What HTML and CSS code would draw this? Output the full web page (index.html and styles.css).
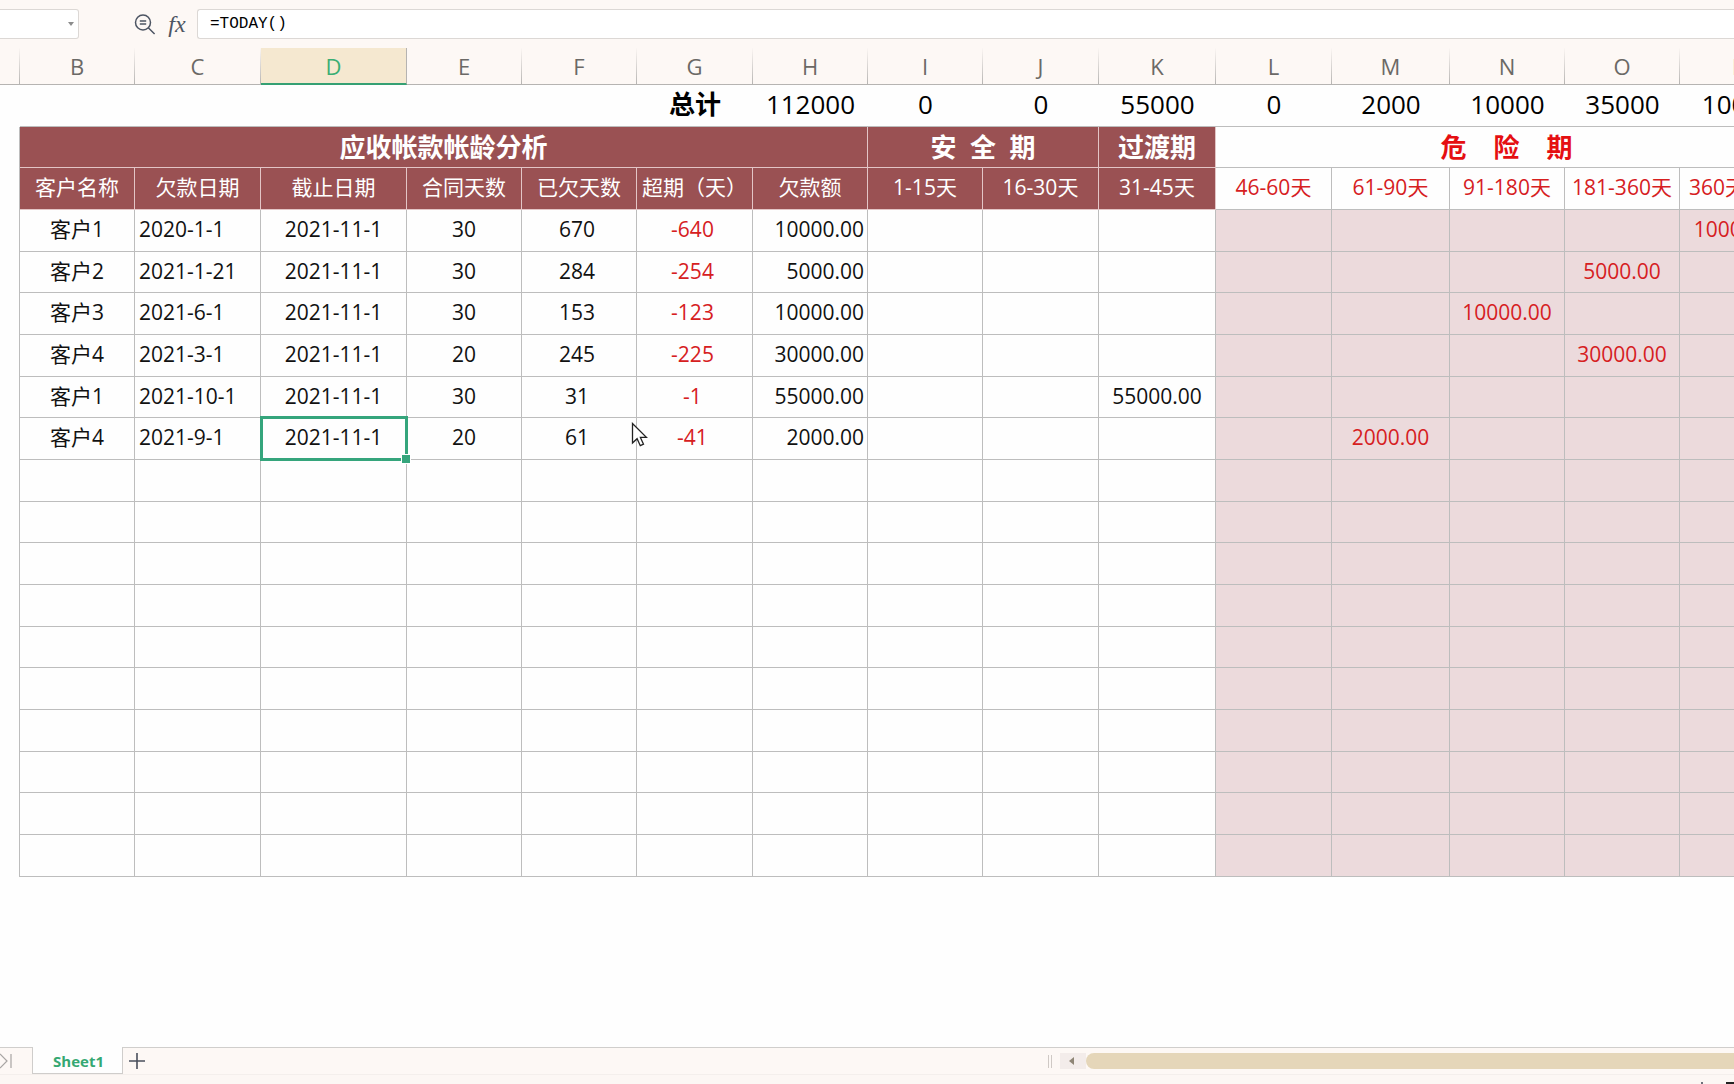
FILE: index.html
```html
<!DOCTYPE html>
<html lang="zh-CN">
<head>
<meta charset="utf-8">
<title>应收帐款帐龄分析</title>
<link rel="stylesheet" href="styles.css">
</head>
<body>
<div class="app">
  <header class="formula-bar">
    <button class="name-box" aria-label="名称框"><svg width="6" height="4" viewBox="0 0 6 4"><path d="M0 0h6L3 4z" fill="#8c8c8c"/></svg></button>
    <button class="tool tool-search" aria-label="查找函数"><svg width="22" height="22" viewBox="0 0 22 22" fill="none" stroke="#4d5563" stroke-width="1.5"><circle cx="9" cy="9.500" r="7.5"/><path d="M14.3 14.8L20.6 21M5.8 7.9h6.4M5.8 10.9h6.4"/></svg></button>
    <button class="tool tool-fx" aria-label="插入函数"><i>fx</i></button>
    <input class="formula" type="text" aria-label="编辑栏" value="=TODAY()">
  </header>
  <main class="sheet">
    <table class="grid">
      <colgroup>
        <col class="w-a"><col class="w-s"><col class="w-c"><col class="w-d"><col class="w-s"><col class="w-s"><col class="w-m"><col class="w-s"><col class="w-s"><col class="w-m"><col class="w-k"><col class="w-m"><col class="w-l"><col class="w-s"><col class="w-s"><col class="w-l">
      </colgroup>
      <thead>
        <tr class="letters"><th></th><th>B</th><th>C</th><th class="active">D</th><th>E</th><th>F</th><th>G</th><th>H</th><th>I</th><th>J</th><th>K</th><th>L</th><th>M</th><th>N</th><th>O</th><th>P</th></tr>
      </thead>
      <tbody>
        <tr class="totals"><td></td><td></td><td></td><td></td><td></td><td></td><th>总计</th><td>112000</td><td>0</td><td>0</td><td>55000</td><td>0</td><td>2000</td><td>10000</td><td>35000</td><td>10000</td></tr>
        <tr class="groups"><td class="edge"></td><th class="dark" colspan="7">应收帐款帐龄分析</th><th class="dark" colspan="2">安  全  期</th><th class="dark">过渡期</th><th class="danger" colspan="5">危    险    期</th></tr>
        <tr class="heads"><td class="edge"></td><th class="dark">客户名称</th><th class="dark">欠款日期</th><th class="dark">截止日期</th><th class="dark">合同天数</th><th class="dark">已欠天数</th><th class="dark">超期（天）</th><th class="dark">欠款额</th><th class="dark">1-15天</th><th class="dark">16-30天</th><th class="dark">31-45天</th><th class="danger">46-60天</th><th class="danger">61-90天</th><th class="danger">91-180天</th><th class="danger">181-360天</th><th class="danger">360天以上</th></tr>
      </tbody>
      <tbody class="data">
        <tr><td></td><td>客户1</td><td>2020-1-1</td><td>2021-11-1</td><td>30</td><td>670</td><td>-640</td><td>10000.00</td><td></td><td></td><td></td><td></td><td></td><td></td><td></td><td>10000.00</td></tr>
        <tr><td></td><td>客户2</td><td>2021-1-21</td><td>2021-11-1</td><td>30</td><td>284</td><td>-254</td><td>5000.00</td><td></td><td></td><td></td><td></td><td></td><td></td><td>5000.00</td><td></td></tr>
        <tr><td></td><td>客户3</td><td>2021-6-1</td><td>2021-11-1</td><td>30</td><td>153</td><td>-123</td><td>10000.00</td><td></td><td></td><td></td><td></td><td></td><td>10000.00</td><td></td><td></td></tr>
        <tr><td></td><td>客户4</td><td>2021-3-1</td><td>2021-11-1</td><td>20</td><td>245</td><td>-225</td><td>30000.00</td><td></td><td></td><td></td><td></td><td></td><td></td><td>30000.00</td><td></td></tr>
        <tr><td></td><td>客户1</td><td>2021-10-1</td><td>2021-11-1</td><td>30</td><td>31</td><td>-1</td><td>55000.00</td><td></td><td></td><td>55000.00</td><td></td><td></td><td></td><td></td><td></td></tr>
        <tr><td></td><td>客户4</td><td>2021-9-1</td><td class="selected">2021-11-1</td><td>20</td><td>61</td><td class="pointed">-41<svg class="pointer" width="17" height="26" viewBox="0 0 17 26"><path d="M1.5 1.5v19.5l4.6-4.3 3.2 7 3.2-1.5-3.1-6.8h6z" fill="#fff" stroke="#222" stroke-width="1.3"/></svg></td><td>2000.00</td><td></td><td></td><td></td><td></td><td>2000.00</td><td></td><td></td><td></td></tr>
        <tr><td></td><td></td><td></td><td></td><td></td><td></td><td></td><td></td><td></td><td></td><td></td><td></td><td></td><td></td><td></td><td></td></tr>
        <tr><td></td><td></td><td></td><td></td><td></td><td></td><td></td><td></td><td></td><td></td><td></td><td></td><td></td><td></td><td></td><td></td></tr>
        <tr><td></td><td></td><td></td><td></td><td></td><td></td><td></td><td></td><td></td><td></td><td></td><td></td><td></td><td></td><td></td><td></td></tr>
        <tr><td></td><td></td><td></td><td></td><td></td><td></td><td></td><td></td><td></td><td></td><td></td><td></td><td></td><td></td><td></td><td></td></tr>
        <tr><td></td><td></td><td></td><td></td><td></td><td></td><td></td><td></td><td></td><td></td><td></td><td></td><td></td><td></td><td></td><td></td></tr>
        <tr><td></td><td></td><td></td><td></td><td></td><td></td><td></td><td></td><td></td><td></td><td></td><td></td><td></td><td></td><td></td><td></td></tr>
        <tr><td></td><td></td><td></td><td></td><td></td><td></td><td></td><td></td><td></td><td></td><td></td><td></td><td></td><td></td><td></td><td></td></tr>
        <tr><td></td><td></td><td></td><td></td><td></td><td></td><td></td><td></td><td></td><td></td><td></td><td></td><td></td><td></td><td></td><td></td></tr>
        <tr><td></td><td></td><td></td><td></td><td></td><td></td><td></td><td></td><td></td><td></td><td></td><td></td><td></td><td></td><td></td><td></td></tr>
        <tr><td></td><td></td><td></td><td></td><td></td><td></td><td></td><td></td><td></td><td></td><td></td><td></td><td></td><td></td><td></td><td></td></tr>
      </tbody>
    </table>
  </main>
  <footer class="tabs">
    <button class="last" aria-label="最后一个工作表"><svg width="14" height="18" viewBox="0 0 14 18" fill="none" stroke="#a8a5a3" stroke-width="1.2"><path d="M0 2l7 7-7 7M11 2v14"/></svg></button>
    <button class="tab">Sheet1</button>
    <button class="add" aria-label="新建工作表"><svg width="16" height="16" viewBox="0 0 16 16" stroke="#4a4f5c" stroke-width="1.6"><path d="M8 0v16M0 8h16"/></svg></button>
    <div class="scroll">
      <span class="grip"></span>
      <button class="arrow" aria-label="向左滚动"><svg width="5" height="8" viewBox="0 0 5 8"><path d="M5 0v8L0 4z" fill="#8f8676"/></svg></button>
      <div class="thumb"></div>
    </div>
  </footer>
  <div class="status">
    <svg width="16" height="16" viewBox="0 0 16 16" stroke="#4a4f5c" stroke-width="1.6"><path d="M8 0v16M0 8h16"/></svg>
    <svg width="8" height="16" viewBox="0 0 8 16" fill="none" stroke="#222" stroke-width="2"><path d="M8 1H1v14h7"/></svg>
  </div>
</div>
</body>
</html>
```

FILE: styles.css
```css
* { box-sizing: border-box; }

body {
  margin: 0;
  background: #fdf8f5;
  color: #111;
  font-family: "Open Sans", "Noto Sans CJK SC", sans-serif;
}

button {
  margin: 0;
  padding: 0;
  border: 0;
  background: none;
  font: inherit;
  color: inherit;
  display: flex;
  align-items: center;
  justify-content: center;
}

.app {
  display: flex;
  flex-direction: column;
  height: 100vh;
  overflow: hidden;
}

.formula-bar {
  display: flex;
  align-items: center;
  flex: none;
  height: 48px;
}

.name-box {
  width: 79px;
  height: 30px;
  padding-right: 4px;
  justify-content: flex-end;
  border: 1px solid #dcd8d5;
  border-left: 0;
  border-radius: 0 3px 3px 0;
  background: #fff;
}

.tool { height: 24px; }
.tool-search { width: 22px; margin-left: 55px; }
.tool-fx { width: 22px; margin: 0 9px 0 10px; }
.tool-fx i {
  font: italic 24px/24px "Liberation Serif", serif;
  color: #4d5563;
}

.formula {
  flex: 1;
  min-width: 0;
  height: 30px;
  padding: 0 12px;
  border: 1px solid #dcd8d5;
  border-right: 0;
  border-radius: 3px 0 0 3px;
  background: #fff;
  color: #000;
  font: 16px "Liberation Mono", monospace;
  outline: 0;
}

.sheet {
  flex: 1;
  min-height: 0;
  overflow: hidden;
  background: #fefefe;
}

.grid {
  table-layout: fixed;
  width: 1px;
  border-spacing: 0;
  font-size: 21px;
  line-height: 28px;
}

.w-a { width: 20px; }
.w-s { width: 115px; }
.w-m { width: 116px; }
.w-k { width: 117px; }
.w-l { width: 118px; }
.w-c { width: 126px; }
.w-d { width: 146px; }

.grid td,
.grid th {
  padding: 0 0 3px;
  text-align: center;
  font-weight: 400;
  white-space: pre;
}

.grid tr { height: 42px; }

.grid .letters { height: 37px; }
.grid .letters th {
  padding: 0;
  border-right: 1px solid;
  border-bottom: 1px solid #bdbbb9;
  border-image: linear-gradient(#fdf8f5, #b5b3b1) 1;
  background: #fdf8f5;
  color: #6b6966;
  font-size: 22px;
}
.grid .letters .active {
  border-bottom: 2px solid #35a073;
  border-image: none;
  border-right-color: #b5b3b1;
  background: #f5e8d0;
  color: #3aae74;
}

.grid .totals td,
.grid .totals th {
  padding-bottom: 4px;
  border-bottom: 1px solid #bdbdbd;
  font-size: 26px;
  color: #000;
}
.grid .totals th,
.grid .groups th {
  font-size: 26px;
  font-weight: 700;
}
.grid .totals td:first-child { border-bottom: 0; }

.grid .groups { height: 41px; }
.grid .groups th { padding: 0; }

.grid .edge { border-right: 1px solid #bdbdbd; }
.grid .dark {
  border-right: 1px solid #e3c5c6;
  border-bottom: 1px solid #e3c5c6;
  background: #9a5153;
  color: #fff;
}
.grid .danger {
  border-right: 1px solid #bdbdbd;
  border-bottom: 1px solid #bdbdbd;
  color: #d6201f;
}
.grid .groups .danger { color: #e50f12; }

.data tr:nth-child(3n + 2) { height: 41px; }
.data td {
  border-right: 1px solid #bdbdbd;
  border-bottom: 1px solid #bdbdbd;
}
.data td:first-child { border-bottom: 0; }
.grid .data td:nth-child(3) { padding-left: 4px; text-align: left; }
.grid .data td:nth-child(6) { padding-right: 4px; }
.grid .data td:nth-child(7) { padding-right: 4px; color: #d6201f; }
.grid .data td:nth-child(8) { padding-right: 3px; text-align: right; }
.data td:nth-child(n + 12) {
  background: #ecdadc;
  color: #d6201f;
}

.selected,
.pointed { position: relative; }
.selected::before {
  content: "";
  position: absolute;
  inset: -2px -2px -2px -1px;
  border: 3px solid #35a57c;
}
.selected::after {
  content: "";
  position: absolute;
  right: -5px;
  bottom: -5px;
  width: 8px;
  height: 8px;
  border: 1px solid #fff;
  background: #35a57c;
}
.pointer {
  position: absolute;
  top: 4px;
  left: -6px;
}

.tabs {
  display: flex;
  flex: none;
  height: 27px;
  border-top: 1px solid #d0cecc;
}
.last { width: 32px; justify-content: flex-start; }
.tab {
  width: 91px;
  height: 27px;
  margin-top: -1px;
  padding: 2px 0 0 2px;
  border: 1px solid #cfcdcb;
  border-top: 0;
  background: #fefefe;
  color: #35a873;
  font-size: 15px;
  font-weight: 700;
}
.add { width: 28px; }

.scroll {
  display: flex;
  align-items: center;
  width: 686px;
  margin-left: auto;
}
.grip {
  width: 4px;
  height: 13px;
  margin-right: 8px;
  border: 1px solid #cfc9c5;
  border-width: 0 1px;
}
.arrow {
  width: 26px;
  height: 16px;
  padding-right: 4px;
  background: #f3ecea;
}
.thumb {
  flex: 1;
  height: 16px;
  border-radius: 8px 0 0 8px;
  background: #e5d6b9;
}

.status {
  display: flex;
  align-items: flex-start;
  justify-content: flex-end;
  gap: 16px;
  flex: none;
  height: 10px;
  padding-top: 7px;
  overflow: hidden;
  border-top: 1px solid #f4efec;
  background: #fcf7f4;
}
```
